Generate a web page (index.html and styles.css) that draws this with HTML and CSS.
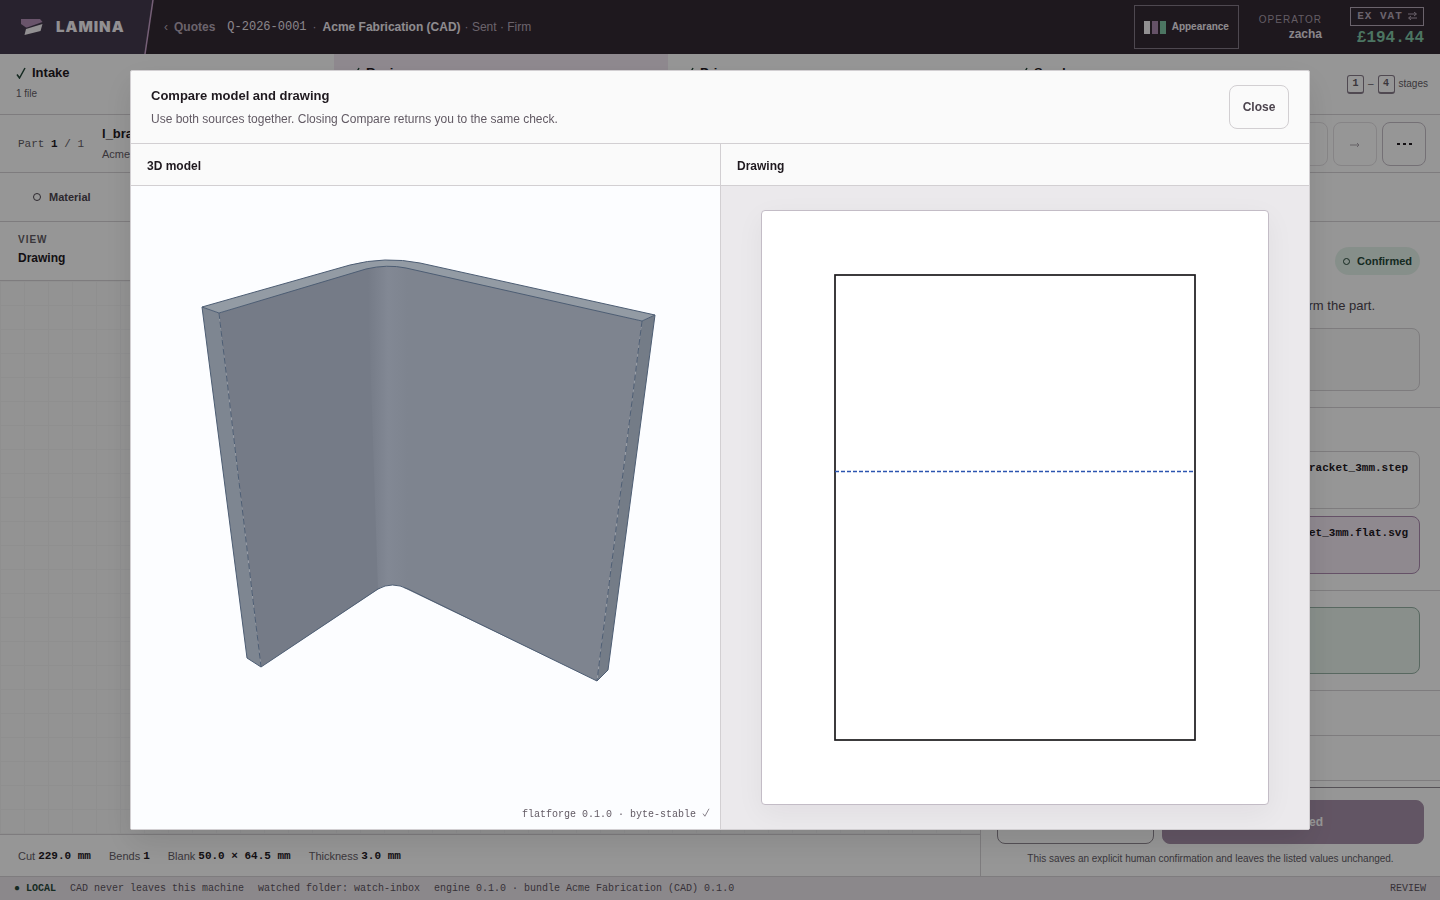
FILE: index.html
```html
<!DOCTYPE html>
<html lang="en">
<head>
<meta charset="utf-8">
<title>Lamina – Q-2026-0001</title>
<link rel="stylesheet" href="styles.css">
</head>
<body>
<div class="app">
  <header class="topbar">
    <div class="brand">
      <svg class="brand-edge" viewBox="0 0 154 54" preserveAspectRatio="none" aria-hidden="true"><path d="M0 0H153L145 54H0Z" fill="#443a4e"/><path d="M153 0L145 54" stroke="#c49fc6" stroke-width="1.500"/></svg>
      <svg class="brand-mark" viewBox="0 0 22 16" aria-hidden="true"><path d="M0 0H19L21.500 3L6 8.500H5L0 5Z" fill="#b08db3"/><path d="M5 10L21.500 5L19.500 12L3.500 16Z" fill="#f4f0f4"/></svg>
      <span class="brand-name">LAMINA</span>
    </div>
    <nav class="crumbs">
      <a href="#quotes" class="crumb-link"><span class="chev">‹</span>Quotes</a>
      <span class="quote-id mono">Q-2026-0001</span><span class="dot">·</span><strong class="client">Acme Fabrication (CAD)</strong><span class="crumb-tail">· Sent · Firm</span>
    </nav>
    <button class="appearance" type="button"><span class="swatches"><i class="sw sw-a"></i><i class="sw sw-b"></i><i class="sw sw-c"></i></span>Appearance</button>
    <div class="operator"><span class="operator-label">OPERATOR</span><strong>zacha</strong></div>
    <div class="total"><button class="vat mono" type="button">EX VAT<svg width="9" height="8" viewBox="0 0 9 8" aria-hidden="true"><path d="M0 2H8M6 0L8.500 2L6 4M9 6H1M3 4L.5 6L3 8" fill="none" stroke="currentColor"/></svg></button><strong class="amount mono">£194.44</strong></div>
  </header>

  <nav class="stages">
    <a class="stage" href="#intake"><b><svg class="tick" viewBox="0 0 10 12" aria-hidden="true"><path d="M1 7.500L3.500 11L9 1" /></svg>Intake</b><small>1 file</small></a>
    <a class="stage is-current" href="#review"><b><svg class="tick" viewBox="0 0 10 12" aria-hidden="true"><path d="M1 7.500L3.500 11L9 1" /></svg>Review</b></a>
    <a class="stage" href="#price"><b><svg class="tick" viewBox="0 0 10 12" aria-hidden="true"><path d="M1 7.500L3.500 11L9 1" /></svg>Price</b></a>
    <a class="stage" href="#send"><b><svg class="tick" viewBox="0 0 10 12" aria-hidden="true"><path d="M1 7.500L3.500 11L9 1" /></svg>Send</b></a>
    <div class="keys"><kbd>1</kbd>–<kbd>4</kbd><span>stages</span></div>
  </nav>

  <section class="partbar">
    <div class="part-count mono">Part <b>1</b> / 1</div>
    <div class="part-name"><b>l_bracket_3mm</b><small>Acme Fabrication</small></div>
    <div class="part-actions"><button type="button" disabled>←</button><button type="button" disabled aria-label="Next part"><svg width="10" height="6" viewBox="0 0 10 6" aria-hidden="true"><path d="M0 3H9M7 1L9 3L7 5" fill="none" stroke="currentColor"/></svg></button><button type="button" class="more" aria-label="More"><i></i><i></i><i></i></button></div>
  </section>

  <div class="checks"><span class="ring"></span>Material</div>

  <div class="work">
    <main class="viewer">
      <div class="view-head"><small>VIEW</small><b>Drawing</b></div>
      <div class="canvas"></div>
      <div class="facts">
        <span>Cut <b class="mono">229.0 mm</b></span><span>Bends <b class="mono">1</b></span><span>Blank <b class="mono">50.0 × 64.5 mm</b></span><span>Thickness <b class="mono">3.0 mm</b></span>
      </div>
    </main>
    <aside class="side">
      <div class="side-scroll">
        <section class="check">
          <span class="badge"><i class="ring"></i>Confirmed</span>
          <p>Check the sources that form the part.</p>
          <div class="box note"></div>
        </section>
        <section class="sources">
          <div class="box file mono">l_bracket_3mm.step</div>
          <div class="box file is-picked mono">l_bracket_3mm.flat.svg</div>
        </section>
        <section class="result"><div class="box ok"></div></section>
        <div class="fold"></div>
        <div class="fold"></div>
      </div>
      <footer class="decide">
        <div class="decide-row"><button type="button" class="ghost">Back</button><button type="button" class="primary">Confirmed</button></div>
        <p>This saves an explicit human confirmation and leaves the listed values unchanged.</p>
      </footer>
    </aside>
  </div>

  <footer class="status mono">
    <b class="local">● LOCAL</b><span>CAD never leaves this machine</span><span>watched folder: watch-inbox</span><span>engine 0.1.0 · bundle Acme Fabrication (CAD) 0.1.0</span><span class="mode">REVIEW</span>
  </footer>
</div>

<div class="backdrop">
  <div class="dialog" role="dialog" aria-modal="true" aria-labelledby="dlg-title">
    <header class="dialog-head">
      <div><h2 id="dlg-title">Compare model and drawing</h2><p>Use both sources together. Closing Compare returns you to the same check.</p></div>
      <button type="button" class="close">Close</button>
    </header>
    <div class="panes">
      <section class="pane">
        <h3>3D model</h3>
        <div class="model">
          <svg viewBox="131 186 589 643" role="img" aria-label="Bent bracket">
            <defs>
              <linearGradient id="bend" gradientUnits="userSpaceOnUse" x1="368" y1="0" x2="408" y2="0"><stop offset="0" stop-color="#757b87"/><stop offset=".5" stop-color="#828894"/><stop offset="1" stop-color="#7e848f"/></linearGradient>
            </defs>
            <path d="M202 307L219 313L261 667L247 658Z" fill="#7e8691"/>
            <path d="M642 321L655 315L608 670L597 681Z" fill="#747c87"/>
            <path d="M219 313L370 266L380 588L261 667Z" fill="#757b87"/>
            <path d="M402 264L642 321L597 681L404 588Z" fill="#7e848f"/>
            <path d="M367 264H410V590L408 589Q392 581 378 589Z" fill="url(#bend)"/>
            <path d="M202 307L350 265Q385 256 420 263L655 315L642 321L406 268Q387 264 366 269L219 313Z" fill="#939ba4"/>
            <g fill="none" stroke="#4d5d73" stroke-width="1">
              <path d="M202 307L350 265Q385 256 420 263L655 315L642 321L406 268Q387 264 366 269L219 313Z"/>
              <path d="M202 307L247 658L261 667L378 589Q392 581 408 589L597 681L608 670L655 315"/>
              <path d="M219 313L261 667M642 321L597 681" stroke-dasharray="6 3"/>
            </g>
          </svg>
          <p class="engine mono">flatforge 0.1.0 · byte-stable <svg viewBox="0 0 10 12" aria-hidden="true"><path d="M1 7.500L3.500 11L9 1"/></svg></p>
        </div>
      </section>
      <section class="pane">
        <h3>Drawing</h3>
        <div class="sheet-area">
          <div class="sheet">
            <svg viewBox="0 0 506 593" role="img" aria-label="Flat pattern"><rect x="73" y="64" width="360" height="465" fill="none" stroke="#1b191c" stroke-width="1.700"/><path d="M73 260.500H433" stroke="#2c55b0" stroke-width="1.500" stroke-dasharray="4 2"/></svg>
          </div>
        </div>
      </section>
    </div>
  </div>
</div>
</body>
</html>
```
FILE: styles.css
```css
* { box-sizing: border-box; }
html, body { height: 100%; margin: 0; }
body { font-family: "Liberation Sans", Arial, sans-serif; font-size: 12px; line-height: 16px; color: #1f191f; background: #fafafa; overflow: hidden; }
button { font: inherit; color: inherit; background: none; margin: 0; padding: 0; }
a { color: inherit; text-decoration: none; }
p, h2, h3 { margin: 0; }
.mono { font-family: "Liberation Mono", monospace; }
.app { height: 100vh; display: flex; flex-direction: column; }

.topbar { flex: none; height: 54px; background: #322832; color: #c9c0ca; display: flex; align-items: center; padding-right: 16px; }
.brand { width: 154px; height: 54px; display: flex; align-items: center; gap: 13px; padding-left: 21px; position: relative; }
.brand-edge { position: absolute; inset: 0; width: 100%; height: 100%; }
.brand-mark { position: relative; width: 22px; height: 16px; }
.brand-name { position: relative; color: #f4f0f4; font-family: Inter, sans-serif; font-weight: 900; font-size: 15px; letter-spacing: 1px; }
.crumbs { flex: 1; display: flex; align-items: center; padding-left: 10px; color: #b3a6b5; white-space: nowrap; }
.crumb-link { font-weight: 600; display: flex; gap: 6px; margin-right: 12px; }
.chev { font-weight: 400; }
.quote-id { color: #e4dfe5; font-size: 12px; }
.dot { margin: 0 6px; }
.client { color: #eee9ef; margin-right: 4px; }
.appearance { height: 44px; width: 105px; border: 1px solid #837885; display: flex; align-items: center; justify-content: center; gap: 6px; font-size: 10px; font-weight: 700; color: #eee9ef; }
.swatches { display: flex; gap: 2px; }
.sw { width: 6px; height: 13px; }
.sw-a { background: #f4f0f4; } .sw-b { background: #a987ac; } .sw-c { background: #7fc3a3; }
.operator { margin-left: 20px; text-align: right; line-height: 14px; display: flex; flex-direction: column; color: #e4dfe5; }
.operator-label { font-size: 10px; letter-spacing: 1px; color: #a79ba9; }
.total { margin-left: 28px; display: flex; flex-direction: column; align-items: flex-end; gap: 2px; }
.vat { height: 19px; width: 74px; border: 1px solid #b3a6b5; display: flex; align-items: center; justify-content: center; gap: 5px; font-size: 11px; line-height: 12px; letter-spacing: 1px; font-weight: 700; color: #b3a6b5; }
.amount { font-size: 16px; line-height: 20px; color: #7fc3a3; }

.stages { flex: none; height: 61px; display: flex; border-bottom: 1px solid #d2cfd2; }
.stage { flex: 1; padding: 11px 16px; display: flex; flex-direction: column; gap: 5px; }
.stage b { font-size: 13px; display: flex; align-items: center; gap: 6px; }
.stage small { font-size: 10px; color: #625a64; }
.tick { width: 10px; height: 12px; fill: none; stroke: #244638; stroke-width: 1.5; }
.is-current { background: #eee4ef; }
.keys { width: 104px; display: flex; align-items: center; justify-content: flex-end; gap: 4px; padding-right: 12px; font-size: 10px; color: #625a64; }
kbd { width: 17px; height: 19px; border: 1px solid #857a88; border-bottom-width: 2px; border-radius: 3px; text-align: center; font: 700 10px/16px "Liberation Mono", monospace; }

.partbar { flex: none; height: 58px; display: flex; align-items: center; padding: 0 14px 0 18px; border-bottom: 1px solid #d2cfd2; }
.part-count { font-size: 11px; color: #625a64; }
.part-count b { color: #1f191f; }
.part-name { flex: 1; margin-left: 18px; display: flex; flex-direction: column; gap: 4px; }
.part-name b { font-size: 13px; }
.part-name small { font-size: 11px; color: #625a64; }
.part-actions { display: flex; gap: 5px; }
.part-actions button { width: 44px; height: 44px; border: 1px solid #e0dde0; border-radius: 8px; color: #aaa4ac; font-size: 11px; }
.part-actions .more { border-color: #c2bbc4; display: flex; align-items: center; justify-content: center; gap: 3px; }
.more i { width: 3px; height: 2px; background: #1f191f; }
.checks { flex: none; height: 49px; border-bottom: 1px solid #d2cfd2; display: flex; align-items: center; gap: 8px; padding-left: 33px; font-size: 11px; font-weight: 600; color: #4c444e; }
.ring { width: 8px; height: 8px; border: 1px solid currentColor; border-radius: 50%; }

.work { flex: 1; min-height: 0; display: flex; }
.viewer { flex: 1; display: flex; flex-direction: column; }
.view-head { height: 59px; padding: 10px 18px; border-bottom: 1px solid #d2cfd2; display: flex; flex-direction: column; gap: 2px; }
.view-head small { font-size: 10px; font-weight: 700; letter-spacing: 1px; color: #625a64; }
.canvas { flex: 1; background: repeating-linear-gradient(90deg, #eeeeef 0 1px, transparent 1px 24px), repeating-linear-gradient(#eeeeef 0 1px, transparent 1px 24px), #f5f5f5; }
.facts { height: 42px; border-top: 1px solid #d2cfd2; display: flex; align-items: center; gap: 18px; padding-left: 18px; color: #625a64; font-size: 11px; }
.facts span { display: flex; gap: 3px; }
.facts b { font-size: 11px; color: #1f191f; }
.side { width: 460px; border-left: 1px solid #d2cfd2; display: flex; flex-direction: column; }
.side-scroll { flex: 1; overflow: hidden; }
.check { height: 186px; padding: 25px 20px 0; border-bottom: 1px solid #d2cfd2; display: flex; flex-direction: column; align-items: flex-end; }
.badge { height: 28px; width: 85px; background: #e0eee6; border-radius: 14px; display: flex; align-items: center; justify-content: center; gap: 7px; font-size: 11px; font-weight: 700; color: #254738; }
.badge .ring { width: 7px; height: 7px; }
.check p { font-size: 13px; margin: 23px 45px 14px 0; color: #4c444e; }
.box { width: 100%; border: 1px solid #d2cfd2; border-radius: 8px; }
.note { height: 63px; background: #f5f5f5; }
.sources { height: 183px; padding: 43px 20px 0; display: flex; flex-direction: column; gap: 7px; border-bottom: 1px solid #d2cfd2; }
.file { height: 58px; padding: 8px 11px; text-align: right; font-size: 11px; font-weight: 700; }
.is-picked { background: #eee4ef; border-color: #a987ac; }
.result { height: 100px; padding: 16px 20px; border-bottom: 1px solid #d2cfd2; }
.ok { height: 67px; background: #e4efe8; border-color: #93aea1; }
.fold { height: 45px; border-bottom: 1px solid #d2cfd2; }
.decide { height: 89px; border-top: 1px solid #8e8790; padding: 12px 16px 0; text-align: center; }
.decide-row { display: flex; gap: 8px; }
.decide button { height: 44px; border-radius: 8px; font-weight: 700; border: 1px solid #8e8790; }
.ghost { width: 157px; }
.decide .primary { flex: 1; background: #a48ea7; border-color: #a48ea7; color: #fafafa; }
.decide p { margin-top: 7px; font-size: 10px; color: #625a64; }
.status { flex: none; height: 24px; border-top: 1px solid #d2cfd2; background: #e8e3e8; display: flex; align-items: center; gap: 14px; padding: 0 14px; font-size: 10px; color: #5c535e; white-space: nowrap; }
.local { color: #254738; }
.mode { margin-left: auto; }

.backdrop { position: fixed; inset: 0; background: rgba(0, 0, 0, .4); display: flex; align-items: center; justify-content: center; }
.dialog { width: 82vw; max-width: 1180px; height: calc(100vh - 140px); background: #fafafa; border: 1px solid #d2cfd2; border-radius: 2px; box-shadow: 0 12px 32px rgba(0, 0, 0, .1); display: flex; flex-direction: column; }
.dialog-head { display: flex; justify-content: space-between; padding: 14px 20px; border-bottom: 1px solid #d2cfd2; }
.dialog-head h2 { font-size: 13px; line-height: 22px; }
.dialog-head p { margin-top: 4px; line-height: 16px; color: #625a64; }
.close { width: 60px; height: 44px; border: 1px solid #d2cfd2; border-radius: 8px; font-weight: 600; color: #4c444e; }
.panes { flex: 1; min-height: 0; display: grid; grid-template-columns: 1fr 1fr; }
.pane { min-width: 0; min-height: 0; display: flex; flex-direction: column; }
.pane + .pane { border-left: 1px solid #d2cfd2; }
.pane h3 { font-size: 12px; line-height: 16px; padding: 14px 16px 11px; border-bottom: 1px solid #d2cfd2; }
.model { flex: 1; min-height: 0; background: #fcfdff; position: relative; }
.model > svg { width: 100%; height: 100%; display: block; }
.engine { position: absolute; right: 10px; bottom: 6px; font-size: 10px; color: #625a64; }
.engine svg { width: 8px; height: 9px; fill: none; stroke: currentColor; }
.sheet-area { flex: 1; min-height: 0; padding: 24px 40px; background: #ebe9ec; display: flex; }
.sheet { flex: 1; min-width: 0; background: #fff; border: 1px solid #c3bcc6; border-radius: 4px; box-shadow: 0 8px 28px rgba(30, 20, 30, .05); }
.sheet svg { width: 100%; height: 100%; display: block; }
```
